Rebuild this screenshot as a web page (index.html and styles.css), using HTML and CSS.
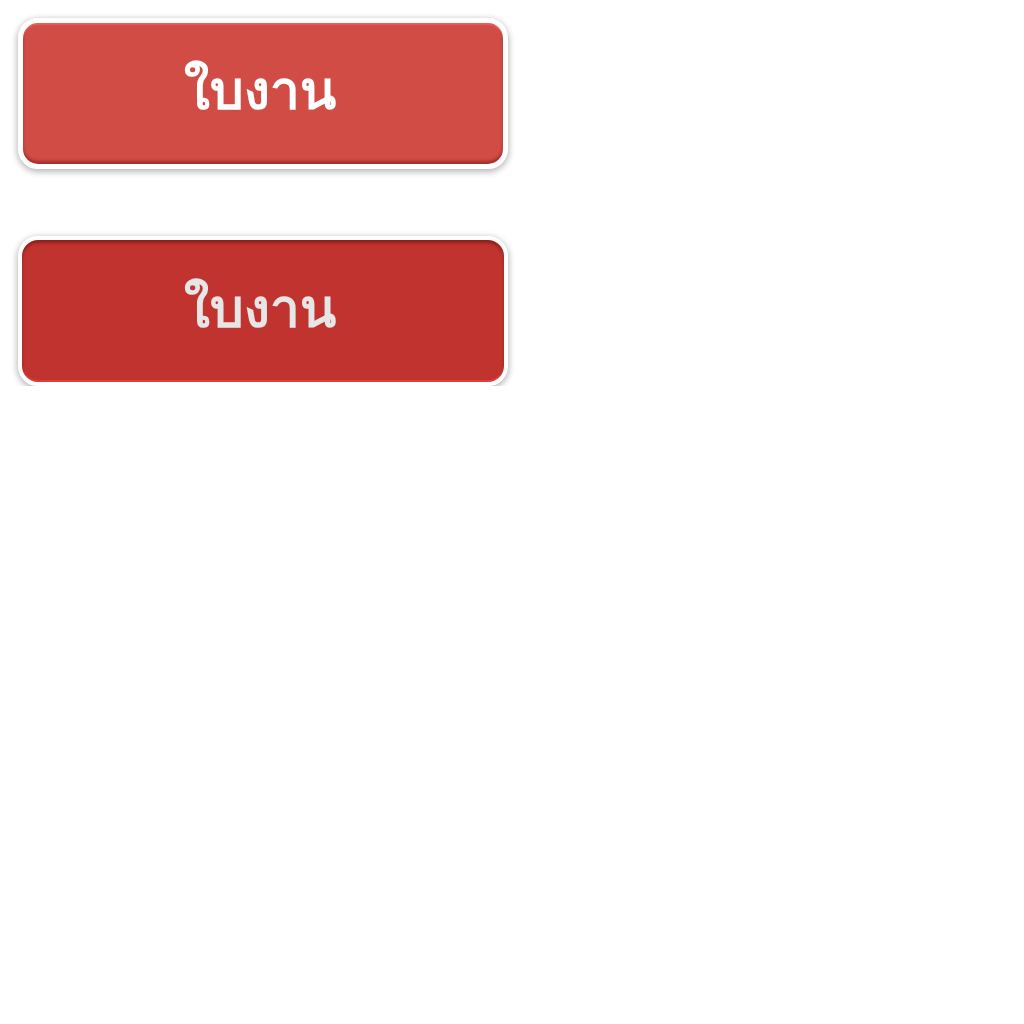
FILE: index.html
```html
<!DOCTYPE html>
<html lang="th">
<head>
<meta charset="utf-8">
<link rel="stylesheet" href="styles.css">
</head>
<body>
<div class="page">
  <a class="btn btn-normal" href="#"><span class="label">ใบงาน</span></a>
  <a class="btn btn-pressed" href="#"><span class="label">ใบงาน</span></a>
</div>
</body>
</html>
```
FILE: styles.css
```css
html, body {
  margin: 0;
  padding: 0;
  background: #ffffff;
}
.page {
  padding: 18px 0 0 18px;
  display: flex;
  flex-direction: column;
  gap: 67px;
  align-items: flex-start;
}
.btn {
  box-sizing: border-box;
  width: 490px;
  height: 151px;
  border: 5px solid #ffffff;
  border-radius: 20px;
  display: flex;
  align-items: center;
  justify-content: center;
  text-decoration: none;
  font-family: "Liberation Serif", serif;
  font-weight: bold;
  font-size: 53px;
}
.btn-normal {
  background: #d04c45;
  color: #ffffff;
  box-shadow: 0 2px 6px 1px rgba(0,0,0,0.28),
              inset 0 2px 1px rgba(240,95,88,0.9),
              inset 0 -3px 3px rgba(120,20,15,0.5);
}
.btn-pressed {
  border-width: 4px;
  height: 150px;
  background: #c0332f;
  color: #e6e6e6;
  box-shadow: 0 2px 6px 1px rgba(0,0,0,0.28),
              inset 0 3px 3px rgba(110,20,15,0.6),
              inset 0 -2px 1px rgba(225,65,58,0.9);
}
.label {
  line-height: 1;
  padding: 0 6px 4px 0;
}
```
